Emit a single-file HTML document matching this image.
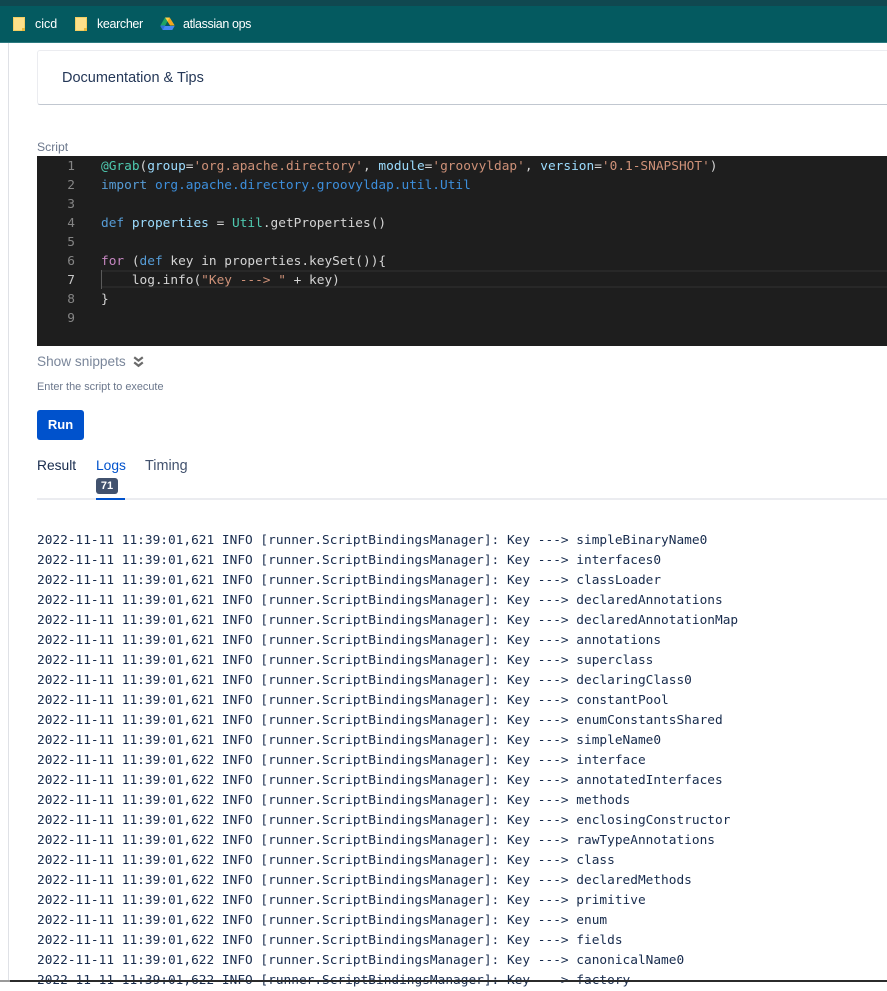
<!DOCTYPE html>
<html><head><meta charset="utf-8">
<style>
html,body{margin:0;padding:0;background:#fff;}
body{width:887px;height:982px;overflow:hidden;position:relative;font-family:"Liberation Sans",sans-serif;}
.a{position:absolute;white-space:pre;}
.bm{color:#fff;font-size:12.5px;top:16px;line-height:16px;}
.fold{position:absolute;top:17px;width:12px;height:14px;background:#fde08a;border:1px solid #f3cf63;box-sizing:border-box;}
.fold:after{content:"";position:absolute;right:-1px;bottom:-1px;width:3px;height:3px;background:#e9b93c;}
.code{font-family:"DejaVu Sans Mono",monospace;font-size:12.8px;line-height:19px;margin-top:1px;}
.ln{color:#858585;left:37px;width:38px;text-align:right;}
.c{left:101px;color:#d4d4d4;}
.kw{color:#569cd6}.st{color:#ce9178}.fn{color:#9cdcfe}.ty{color:#4ec9b0}.pu{color:#c586c0}.im{color:#3d8fdc}
#log{position:absolute;left:37px;top:531px;font-family:"DejaVu Sans Mono",monospace;font-size:12.8px;line-height:20px;color:#172b4d;white-space:pre;}
</style></head><body>
<div class="a" style="left:0;top:0;width:887px;height:6px;background:#104850"></div>
<div class="a" style="left:0;top:6px;width:887px;height:36px;background:#045a60"></div>
<div class="a" style="left:0;top:42px;width:887px;height:1px;background:#2c7a80"></div>
<div class="fold" style="left:13px"></div>
<div class="a bm" style="left:35px">cicd</div>
<div class="fold" style="left:75px"></div>
<div class="a bm" style="left:97px;letter-spacing:-.35px">kearcher</div>
<svg class="a" style="left:160px;top:17px" width="15" height="14" viewBox="0 0 15 14">
<path d="M5 0.5H9.6L5.2 8.5H0.4Z" fill="#1fa463"/>
<path d="M5 0.5H9.6L14.6 8.5H10.2Z" fill="#ffd04b"/>
<path d="M9.6 0.5L14.6 8.5H10.2L7.5 4.2Z" fill="#f4a71d"/>
<path d="M0.4 9L2.7 13H12.3L14.6 9Z" fill="#4687f4"/>
<path d="M5.2 8.5L0.4 8.5L2.7 13Z" fill="#2f6fd8"/>
</svg>
<div class="a bm" style="left:183px;letter-spacing:-.38px">atlassian ops</div>

<div class="a" style="left:8px;top:43px;width:1px;height:937px;background:#dfe1e6"></div>

<div class="a" style="left:37px;top:50px;width:860px;height:55px;box-sizing:border-box;border:1px solid #ebecf0;border-bottom:1px solid #c1c7d0;border-radius:3px;background:#fff"></div>
<div class="a" style="left:62px;top:70px;font-size:14.5px;line-height:17px;color:#253858">Documentation &amp; Tips</div>

<div class="a" style="left:37px;top:140px;font-size:12.2px;line-height:15px;color:#6b778c">Script</div>
<div class="a" style="left:37px;top:156px;width:850px;height:190px;background:#1e1e1e"></div>
<div class="a" style="left:101px;top:270px;width:786px;height:18px;box-sizing:border-box;border-top:2px solid #282828;border-bottom:2px solid #282828"></div>
<div class="a" style="left:101px;top:270px;width:1px;height:19px;background:#5a5a5a"></div>

<div class="a code ln" style="top:156px">1</div>
<div class="a code ln" style="top:175px">2</div>
<div class="a code ln" style="top:194px">3</div>
<div class="a code ln" style="top:213px">4</div>
<div class="a code ln" style="top:232px">5</div>
<div class="a code ln" style="top:251px">6</div>
<div class="a code ln" style="top:270px;color:#c6c6c6">7</div>
<div class="a code ln" style="top:289px">8</div>
<div class="a code ln" style="top:308px">9</div>

<div class="a code c" style="top:156px"><span class="ty">@Grab</span>(<span class="fn">group</span>=<span class="st">'org.apache.directory'</span>, <span class="fn">module</span>=<span class="st">'groovyldap'</span>, <span class="fn">version</span>=<span class="st">'0.1-SNAPSHOT'</span>)</div>
<div class="a code c" style="top:175px"><span class="kw">import</span> <span class="im">org.apache.directory.groovyldap.util.Util</span></div>
<div class="a code c" style="top:213px"><span class="kw">def</span> <span class="fn">properties</span> = <span class="ty">Util</span>.getProperties()</div>
<div class="a code c" style="top:251px"><span class="pu">for</span> (<span class="kw">def</span> key in properties.keySet()){</div>
<div class="a code c" style="top:270px">    log.info(<span class="st">"Key ---&gt; "</span> + key)</div>
<div class="a code c" style="top:289px">}</div>

<div class="a" style="left:37px;top:353px;font-size:13.65px;line-height:17px;color:#7a869a">Show snippets</div>
<svg class="a" style="left:133px;top:356px" width="11" height="12" viewBox="0 0 11 12"><path d="M1.2 1.2L5.5 4.6L9.8 1.2M1.2 6.4L5.5 9.8L9.8 6.4" fill="none" stroke="#6b6b6b" stroke-width="2.2"/></svg>
<div class="a" style="left:37px;top:380px;font-size:10.9px;line-height:14px;color:#6b778c">Enter the script to execute</div>

<div class="a" style="left:37px;top:410px;width:47px;height:30px;background:#0052cc;border-radius:3px;color:#fff;font-size:13px;font-weight:bold;line-height:30px;text-align:center">Run</div>

<div class="a" style="left:37px;top:457px;font-size:13.8px;line-height:17px;color:#172b4d">Result</div>
<div class="a" style="left:96px;top:457px;font-size:13.8px;line-height:17px;color:#0052cc">Logs</div>
<div class="a" style="left:145px;top:458px;font-size:14.4px;line-height:17px;color:#42526e">Timing</div>
<div class="a" style="left:96px;top:478px;width:22px;height:16px;background:#42526e;border-radius:3px;color:#fff;font-size:11px;font-weight:bold;line-height:16px;text-align:center">71</div>
<div class="a" style="left:37px;top:498px;width:850px;height:2px;background:#ebecf0"></div>
<div class="a" style="left:96px;top:498px;width:29px;height:2px;background:#0052cc"></div>

<div id="log">2022-11-11 11:39:01,621 INFO [runner.ScriptBindingsManager]: Key ---&gt; simpleBinaryName0
2022-11-11 11:39:01,621 INFO [runner.ScriptBindingsManager]: Key ---&gt; interfaces0
2022-11-11 11:39:01,621 INFO [runner.ScriptBindingsManager]: Key ---&gt; classLoader
2022-11-11 11:39:01,621 INFO [runner.ScriptBindingsManager]: Key ---&gt; declaredAnnotations
2022-11-11 11:39:01,621 INFO [runner.ScriptBindingsManager]: Key ---&gt; declaredAnnotationMap
2022-11-11 11:39:01,621 INFO [runner.ScriptBindingsManager]: Key ---&gt; annotations
2022-11-11 11:39:01,621 INFO [runner.ScriptBindingsManager]: Key ---&gt; superclass
2022-11-11 11:39:01,621 INFO [runner.ScriptBindingsManager]: Key ---&gt; declaringClass0
2022-11-11 11:39:01,621 INFO [runner.ScriptBindingsManager]: Key ---&gt; constantPool
2022-11-11 11:39:01,621 INFO [runner.ScriptBindingsManager]: Key ---&gt; enumConstantsShared
2022-11-11 11:39:01,621 INFO [runner.ScriptBindingsManager]: Key ---&gt; simpleName0
2022-11-11 11:39:01,622 INFO [runner.ScriptBindingsManager]: Key ---&gt; interface
2022-11-11 11:39:01,622 INFO [runner.ScriptBindingsManager]: Key ---&gt; annotatedInterfaces
2022-11-11 11:39:01,622 INFO [runner.ScriptBindingsManager]: Key ---&gt; methods
2022-11-11 11:39:01,622 INFO [runner.ScriptBindingsManager]: Key ---&gt; enclosingConstructor
2022-11-11 11:39:01,622 INFO [runner.ScriptBindingsManager]: Key ---&gt; rawTypeAnnotations
2022-11-11 11:39:01,622 INFO [runner.ScriptBindingsManager]: Key ---&gt; class
2022-11-11 11:39:01,622 INFO [runner.ScriptBindingsManager]: Key ---&gt; declaredMethods
2022-11-11 11:39:01,622 INFO [runner.ScriptBindingsManager]: Key ---&gt; primitive
2022-11-11 11:39:01,622 INFO [runner.ScriptBindingsManager]: Key ---&gt; enum
2022-11-11 11:39:01,622 INFO [runner.ScriptBindingsManager]: Key ---&gt; fields
2022-11-11 11:39:01,622 INFO [runner.ScriptBindingsManager]: Key ---&gt; canonicalName0
2022-11-11 11:39:01,622 INFO [runner.ScriptBindingsManager]: Key ---&gt; factory</div>

<div class="a" style="left:0;top:980px;width:887px;height:2px;background:#2b2b2b"></div>
<div class="a" style="left:0;top:980px;width:10px;height:2px;background:#9a9a9a"></div>
</body></html>
